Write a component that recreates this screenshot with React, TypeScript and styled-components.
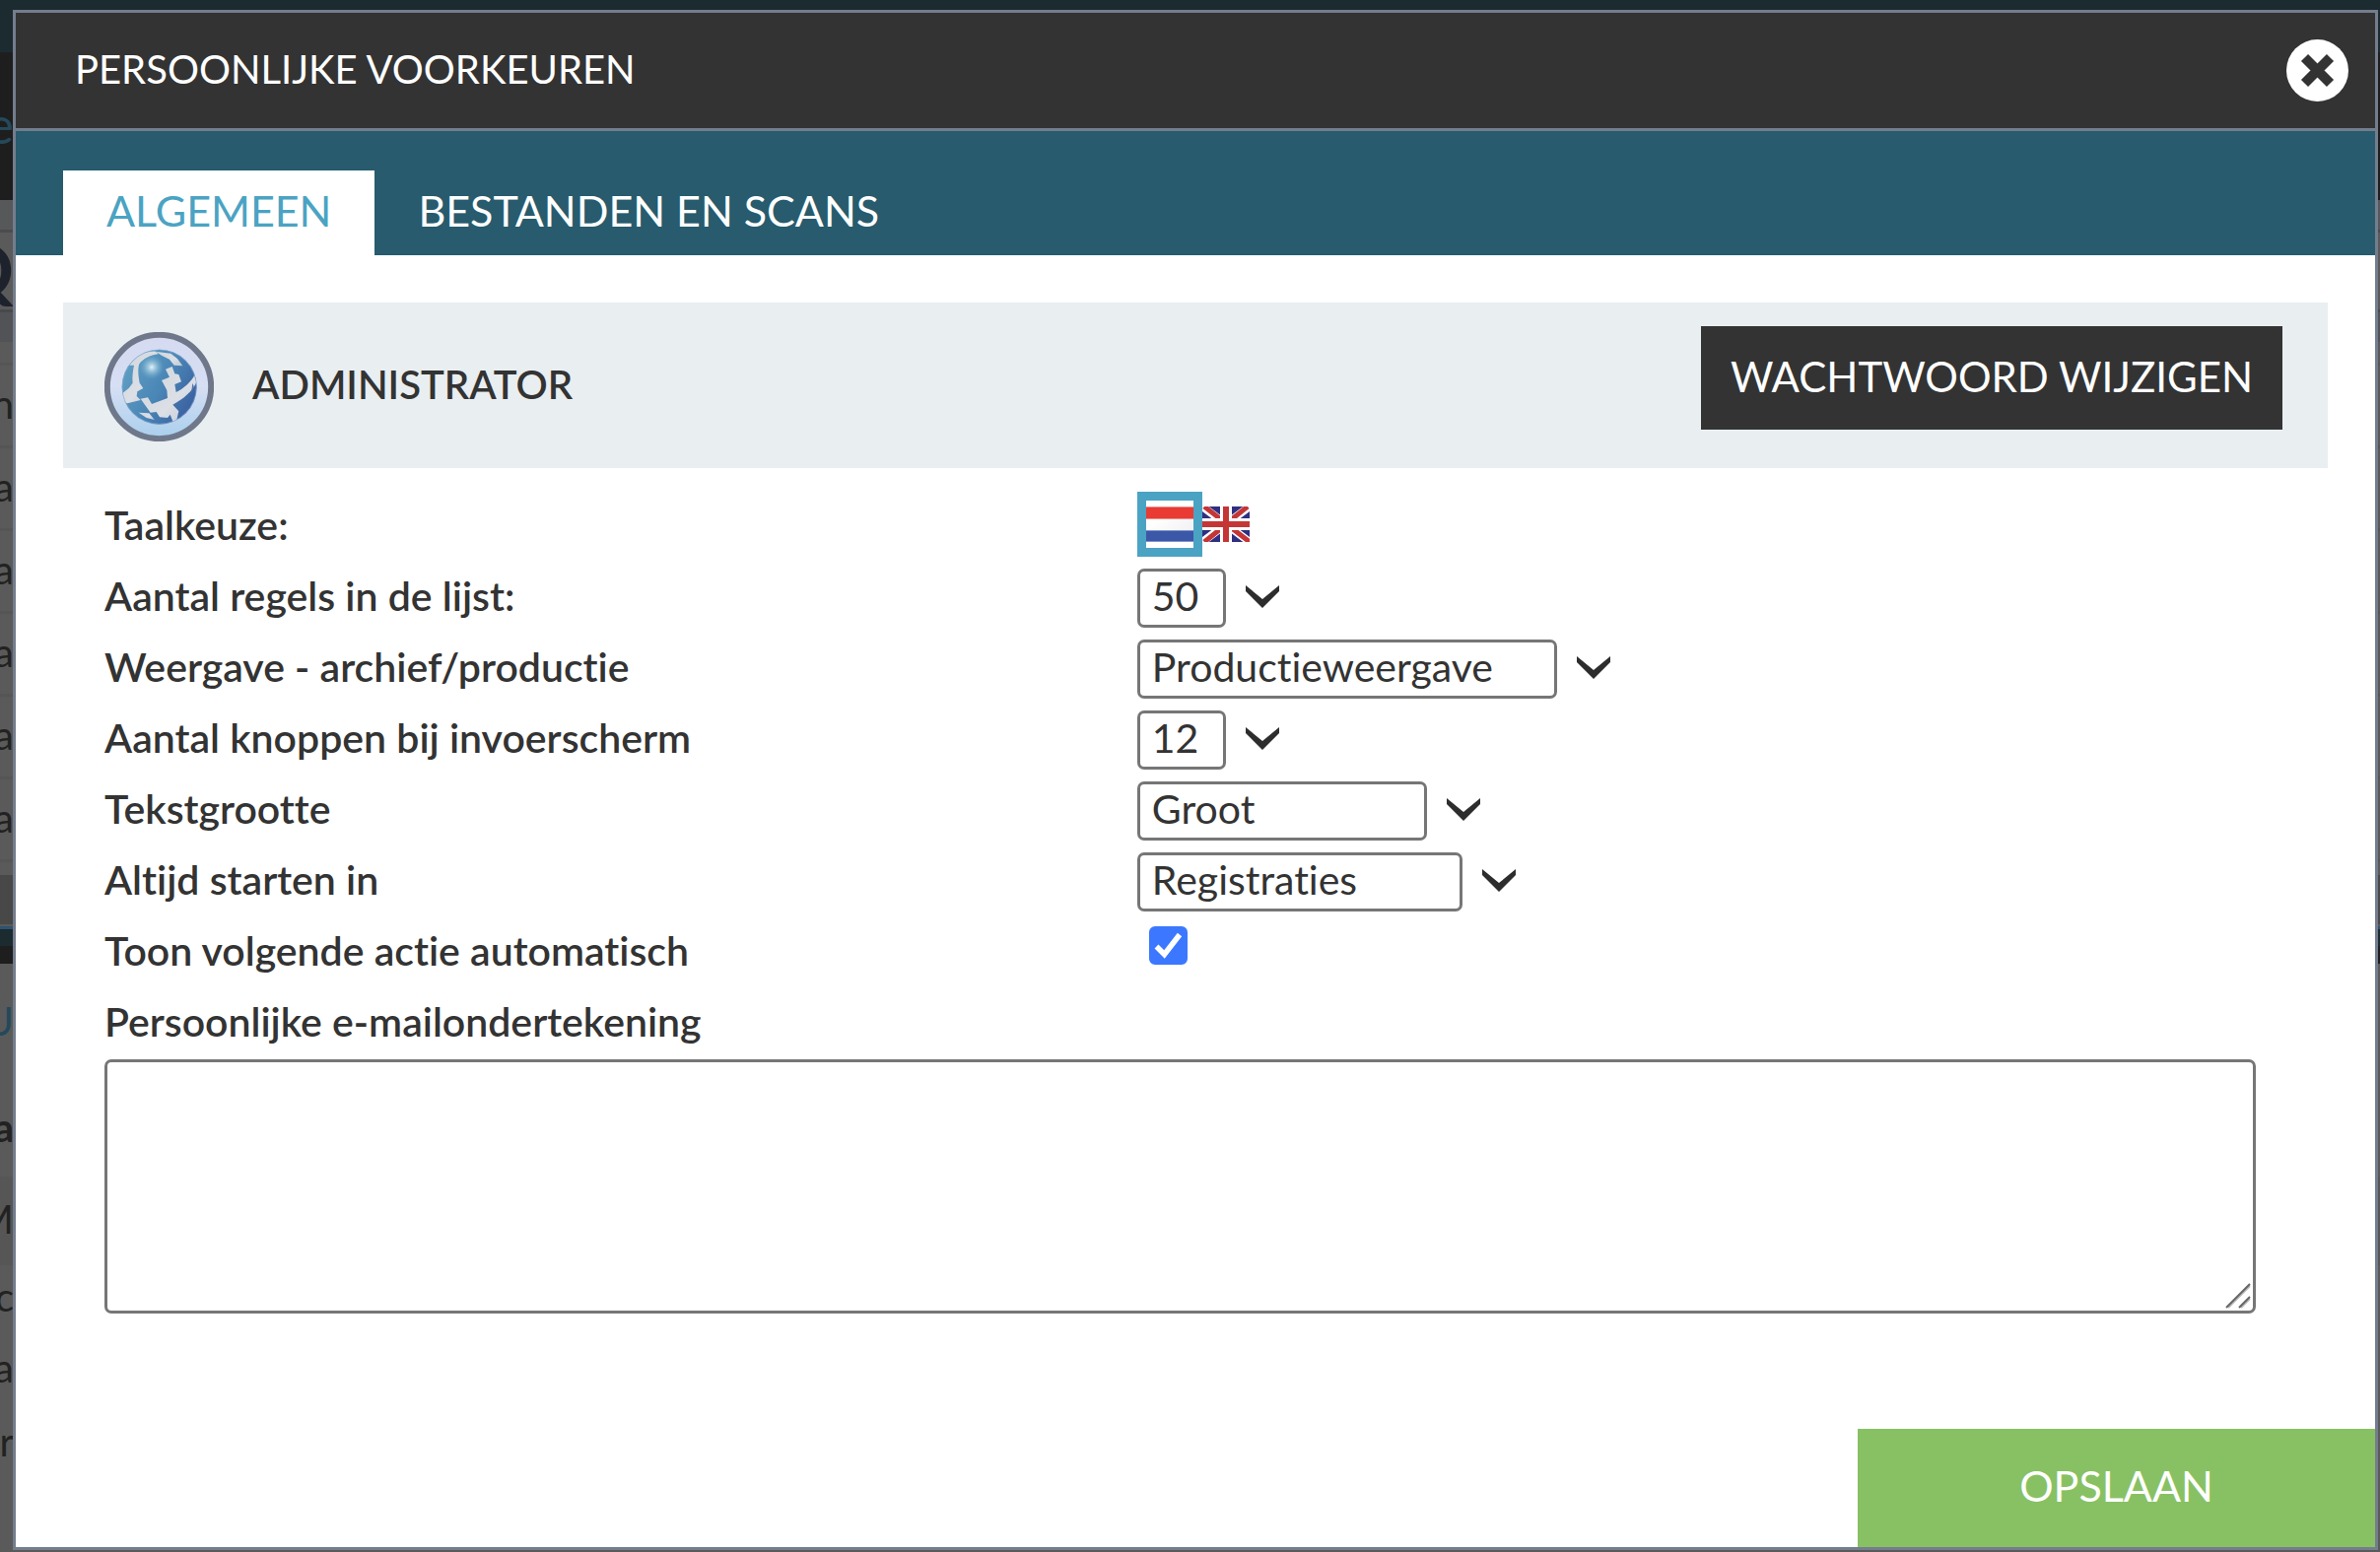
import React, { useState } from "react";
import styled, { createGlobalStyle } from "styled-components";

const color = {
  ink: "#333333",
  line: "#747d8d",
  field: "#767676",
  teal: "#275b6d",
  accent: "#4ba3c3",
  panel: "#e9eef1",
  green: "#88c163",
};

const GlobalStyle = createGlobalStyle`
  *, *::before, *::after { box-sizing: border-box; }
  body {
    margin: 0;
    background: #5a5a5a;
    color: ${color.ink};
    font-family: Lato, "Open Sans", sans-serif;
    font-variant-ligatures: none;
  }
  button, select, textarea, input {
    margin: 0;
    color: inherit;
    font-family: inherit;
    font-variant-ligatures: none;
  }
`;

const Screen = styled.div`
  position: relative;
  display: flex;
  min-height: 100vh;
  padding: 10px 2px 2px 13px;
`;

/* Dimmed page behind the dialog */
const Backdrop = styled.div`
  position: absolute;
  inset: 0;
  overflow: hidden;
  font-size: 40px;
  color: #222222;
`;

const Band = styled.div<{
  $height: number;
  $bg?: string;
  $rule?: string;
  $ink?: string;
  $bold?: boolean;
  $size?: number;
}>`
  display: flex;
  align-items: center;
  height: ${(p) => p.$height}px;
  background: ${(p) => p.$bg ?? "#5a5a5a"};
  border-bottom: ${(p) => (p.$rule ? `3px solid ${p.$rule}` : "0")};
  color: ${(p) => p.$ink ?? "inherit"};
  font-weight: ${(p) => (p.$bold ? 700 : 400)};
  font-size: ${(p) => p.$size ?? 40}px;
  line-height: 1;
`;

const Sliver = styled.span`
  display: flex;
  justify-content: flex-end;
  width: 14px;
  padding-bottom: 4px;
  white-space: nowrap;
`;

const Dialog = styled.section`
  position: relative;
  display: flex;
  flex: 1;
  flex-direction: column;
  border: 3px solid ${color.line};
  background: #ffffff;
`;

const TitleBar = styled.header`
  display: flex;
  align-items: center;
  justify-content: space-between;
  height: 120px;
  padding: 0 27px 0 60px;
  border-bottom: 3px solid ${color.line};
  background: ${color.ink};
  color: #ffffff;
`;

const Title = styled.h1`
  margin: 0;
  padding-bottom: 4px;
  font-size: 40px;
  font-weight: 400;
  line-height: 48px;
`;

const CloseButton = styled.button`
  display: flex;
  width: 63px;
  height: 63px;
  padding: 0;
  border: 0;
  background: none;
  cursor: pointer;
`;

const TabBar = styled.nav`
  display: flex;
  padding: 40px 48px 0;
  background: ${color.teal};
`;

const Tab = styled.a<{ $active?: boolean }>`
  display: flex;
  align-items: center;
  height: 86px;
  padding: 0 44px 4px;
  background: ${(p) => (p.$active ? "#ffffff" : "transparent")};
  color: ${(p) => (p.$active ? color.accent : "#ffffff")};
  font-size: 43px;
  line-height: 48px;
  text-decoration: none;
`;

const Content = styled.main`
  padding: 48px 48px 0;
`;

const UserBar = styled.div`
  display: flex;
  align-items: flex-start;
  justify-content: space-between;
  padding: 24px 46px 27px 42px;
  background: ${color.panel};
`;

const User = styled.div`
  display: flex;
  align-items: center;
  gap: 39px;
  padding-top: 6px;
`;

const UserName = styled.h2`
  margin: 0;
  padding-bottom: 6px;
  font-size: 40px;
  font-weight: 600;
  line-height: 48px;
`;

const DarkButton = styled.button`
  height: 105px;
  padding: 0 30px 4px;
  border: 0;
  background: ${color.ink};
  font-size: 42px;
  line-height: 48px;
  cursor: pointer;

  && { color: #ffffff; }
`;

const Form = styled.form`
  padding: 24px 73px 0 42px;
`;

const Row = styled.div`
  display: grid;
  grid-template-columns: 48% 1fr;
  align-items: center;
  height: 72px;
`;

const Label = styled.label`
  padding-bottom: 4px;
  font-size: 41px;
  font-weight: 600;
  line-height: 48px;
  white-space: nowrap;
`;

const Control = styled.div`
  display: flex;
  align-items: center;
  gap: 20px;
`;

const Flags = styled.div`
  display: flex;
  align-items: center;
  align-self: start;
`;

const FlagButton = styled.button<{ $selected?: boolean }>`
  display: flex;
  align-items: center;
  justify-content: center;
  box-sizing: content-box;
  width: 48px;
  height: 48px;
  padding: 0;
  border: ${(p) => (p.$selected ? `9px solid ${color.accent}` : "0")};
  background: #ffffff;
  cursor: pointer;
`;

const Select = styled.select<{ $width: number }>`
  appearance: none;
  width: ${(p) => p.$width}px;
  height: 60px;
  padding: 0 9px 4px 12px;
  border: 3px solid ${color.field};
  border-radius: 7px;
  background: #ffffff;
  font-size: 41px;
  line-height: 48px;
`;

const CheckWrap = styled.span`
  position: relative;
  display: flex;
  align-self: start;
  margin: 9px 0 0 12px;

  svg {
    position: absolute;
    inset: 0;
    pointer-events: none;
  }
`;

const Checkbox = styled.input`
  appearance: none;
  width: 39px;
  height: 39px;
  border: 3px solid ${color.field};
  border-radius: 6px;
  background: #ffffff;

  &:checked {
    border-color: #3b78ff;
    background: #3b78ff;
  }
`;

const SignatureBox = styled.div`
  position: relative;
  display: flex;

  svg {
    position: absolute;
    right: 5px;
    bottom: 5px;
  }
`;

const Signature = styled.textarea`
  width: 100%;
  height: 258px;
  padding: 6px 12px;
  border: 3px solid ${color.field};
  border-radius: 7px;
  font-size: 41px;
  line-height: 48px;
  resize: none;
`;

const Footer = styled.footer`
  display: flex;
  justify-content: flex-end;
  margin-top: auto;
`;

const SaveButton = styled.button`
  width: 525px;
  height: 120px;
  padding: 0 0 4px;
  border: 0;
  background: ${color.green};
  font-size: 43px;
  line-height: 48px;
  cursor: pointer;

  && { color: #ffffff; }
`;

const CloseIcon = () => (
  <svg width="63" height="63" viewBox="0 0 63 63" aria-hidden="true">
    <circle cx="31.5" cy="31.5" r="31.5" fill="#ffffff" />
    <path d="M18.5 18.5 44.5 44.5M44.5 18.5 18.5 44.5" stroke="#333333" strokeWidth="10" />
  </svg>
);

const Chevron = () => (
  <svg width="34" height="28" viewBox="0 0 34 28" aria-hidden="true">
    <path d="M0 1 17 15 34 1V7L17 24 0 7Z" fill="#2d2d2d" />
  </svg>
);

const DutchFlag = () => (
  <svg width="48" height="36" viewBox="0 0 48 36" aria-hidden="true">
    <defs>
      <linearGradient id="nl-white" x1="0" y1="0" x2="1" y2="1">
        <stop offset="0.3" stopColor="#ffffff" />
        <stop offset="1" stopColor="#ededf2" />
      </linearGradient>
    </defs>
    <rect width="48" height="36" fill="url(#nl-white)" />
    <rect width="48" height="12" fill="#e93a34" />
    <rect y="24" width="48" height="12" fill="#3b57a7" />
    <path d="M0 .5H48M0 12.5H48" stroke="#f0908c" />
    <path d="M0 24.5H48M0 35.5H48" stroke="#8292c8" />
  </svg>
);

const BritishFlag = () => (
  <svg width="48" height="36" viewBox="0 0 48 36" aria-hidden="true">
    <rect width="48" height="36" fill="#2f2f82" />
    <path d="M0 0 48 36M48 0 0 36" stroke="#ffffff" strokeWidth="8" />
    <path d="M2 0 24 17M46 0 26 16M22 20 2 36M26 19 48 36" stroke="#c43636" strokeWidth="5" />
    <path d="M24 0V36M0 18H48" stroke="#ffffff" strokeWidth="12" />
    <path d="M24 0V36M0 18H48" stroke="#c43636" strokeWidth="6" />
  </svg>
);

const Check = () => (
  <svg width="39" height="39" viewBox="0 0 39 39" aria-hidden="true">
    <path d="M7.5 20.5 15.5 28.5 31 8.5" fill="none" stroke="#ffffff" strokeWidth="5.5" />
  </svg>
);

const ResizeGrip = () => (
  <svg width="26" height="26" viewBox="0 0 26 26" aria-hidden="true">
    <path d="M3 25 25 3M16 25 25 16" stroke="#bdbdbd" strokeWidth="2" />
    <path d="M1 25 25 1M14 25 25 14" stroke="#666666" strokeWidth="2" />
  </svg>
);

const GlobeAvatar = () => (
  <svg width="111" height="111" viewBox="48 51 333 333" role="img" aria-label="Administrator">
    <defs>
      <linearGradient id="halo" x1="0" y1="0" x2="0" y2="1">
        <stop offset="0" stopColor="#d5daf1" />
        <stop offset="0.5" stopColor="#d6dff4" />
        <stop offset="1" stopColor="#a9cfec" />
      </linearGradient>
      <linearGradient id="ocean" x1="0.1" y1="0.2" x2="1" y2="0.7">
        <stop offset="0" stopColor="#5d9cc2" />
        <stop offset="0.5" stopColor="#4a86b6" />
        <stop offset="1" stopColor="#3a60a0" />
      </linearGradient>
      <radialGradient id="shine">
        <stop offset="0" stopColor="#e4f2f9" />
        <stop offset="0.4" stopColor="#a5cde2" stopOpacity="0.7" />
        <stop offset="1" stopColor="#6ba6c8" stopOpacity="0" />
      </radialGradient>
      <linearGradient id="land" x1="0" y1="0" x2="1" y2="1">
        <stop offset="0" stopColor="#d0d6dc" />
        <stop offset="0.6" stopColor="#dcdfe6" />
        <stop offset="1" stopColor="#bfc7d6" />
      </linearGradient>
      <clipPath id="ball">
        <circle cx="215" cy="218" r="114" />
      </clipPath>
    </defs>
    <circle cx="214.5" cy="217.5" r="158" fill="url(#halo)" stroke="#6f788b" strokeWidth="18" />
    <circle cx="215" cy="218" r="114" fill="url(#ocean)" />
    <circle cx="192" cy="158" r="38" fill="url(#shine)" />
    <g clipPath="url(#ball)" fill="url(#land)">
      <path d="M124 152C146 122 172 108 204 110L212 118C186 122 166 132 154 148 148 166 152 190 155 206L166 222 148 232 146 246 158 258 118 268 98 262 104 236 122 222 134 206C132 190 134 172 138 152Z" />
      <path d="M204 110 250 116 270 132 286 154 260 152 246 134 222 122Z" />
      <path d="M234 164 254 156 262 178 274 180 282 202 262 210 266 234C290 222 312 202 322 182L328 204C316 230 290 254 256 272L274 292 268 318 258 328 248 302 240 312 216 310 206 294 188 296 158 254 180 250 192 270 240 252 238 228 222 198 246 188Z" />
      <path d="M152 296 184 298 200 318 176 312Z" />
    </g>
    <path d="M316 206 320 216 312 240Z" fill="#4f74ab" />
    <circle cx="215" cy="218" r="113" fill="none" stroke="#8fb0d2" strokeOpacity="0.6" strokeWidth="3" />
  </svg>
);

type SelectRowProps = { id: string; label: string; width: number; options: string[]; value: string };

const SelectRow = ({ id, label, width, options, value }: SelectRowProps) => (
  <Row>
    <Label htmlFor={id}>{label}</Label>
    <Control>
      <Select id={id} $width={width} defaultValue={value}>
        {options.map((option) => (
          <option key={option}>{option}</option>
        ))}
      </Select>
      <Chevron />
    </Control>
  </Row>
);

const selectRows: SelectRowProps[] = [
  { id: "regels", label: "Aantal regels in de lijst:", width: 90, options: ["50"], value: "50" },
  {
    id: "weergave",
    label: "Weergave - archief/productie",
    width: 426,
    options: ["Productieweergave"],
    value: "Productieweergave",
  },
  { id: "knoppen", label: "Aantal knoppen bij invoerscherm", width: 90, options: ["12"], value: "12" },
  { id: "tekst", label: "Tekstgrootte", width: 294, options: ["Groot"], value: "Groot" },
  { id: "start", label: "Altijd starten in", width: 330, options: ["Registraties"], value: "Registraties" },
];

const PageBehind = () => (
  <Backdrop aria-hidden="true">
    <Band $height={53} $bg="#1c2b30" />
    <Band $height={150} $bg="#1e1e1e" $ink="#24495a" $size={52}>
      <Sliver>e</Sliver>
    </Band>
    <Band $height={33} $bg="#57585a" $rule="#4b4c4f" />
    <Band $height={81} $ink="#1e222d" $bold $size={72} $rule="#48494c">
      <Sliver>Q</Sliver>
    </Band>
    <Band $height={30} $bg="#525356" />
    <Band $height={24} $rule="#555555" />
    <Band $height={84} $rule="#555555">
      <Sliver>n</Sliver>
    </Band>
    {[1, 2, 3, 4, 5].map((n) => (
      <Band key={n} $height={84} $rule="#555555">
        <Sliver>a</Sliver>
      </Band>
    ))}
    <Band $height={13} />
    <Band $height={50} $bg="#484848" />
    <Band $height={5} $bg="#5a5a5a" $rule="#2c5470" />
    <Band $height={17} $bg="#1c2b30" />
    <Band $height={18} $bg="#1e1e1e" />
    <Band $height={120} $ink="#24495a">
      <Sliver>U</Sliver>
    </Band>
    <Band $height={96} $bold>
      <Sliver>a</Sliver>
    </Band>
    <Band $height={90} $bg="#565656">
      <Sliver>M</Sliver>
    </Band>
    <Band $height={68}>
      <Sliver>c</Sliver>
    </Band>
    <Band $height={75}>
      <Sliver>a</Sliver>
    </Band>
    <Band $height={75}>
      <Sliver>r</Sliver>
    </Band>
  </Backdrop>
);

export default function App() {
  const [language, setLanguage] = useState("nl");

  return (
    <>
      <GlobalStyle />
      <Screen>
        <PageBehind />
        <Dialog role="dialog" aria-labelledby="title">
          <TitleBar>
            <Title id="title">PERSOONLIJKE VOORKEUREN</Title>
            <CloseButton type="button" aria-label="Sluiten">
              <CloseIcon />
            </CloseButton>
          </TitleBar>
          <TabBar>
            <Tab href="#algemeen" $active aria-current="page">
              ALGEMEEN
            </Tab>
            <Tab href="#bestanden">BESTANDEN EN SCANS</Tab>
          </TabBar>
          <Content>
            <UserBar>
              <User>
                <GlobeAvatar />
                <UserName>ADMINISTRATOR</UserName>
              </User>
              <DarkButton type="button">WACHTWOORD WIJZIGEN</DarkButton>
            </UserBar>
            <Form id="preferences">
              <Row>
                <Label as="span" id="taal">
                  Taalkeuze:
                </Label>
                <Flags role="group" aria-labelledby="taal">
                  <FlagButton
                    type="button"
                    aria-label="Nederlands"
                    $selected={language === "nl"}
                    onClick={() => setLanguage("nl")}
                  >
                    <DutchFlag />
                  </FlagButton>
                  <FlagButton
                    type="button"
                    aria-label="English"
                    $selected={language === "en"}
                    onClick={() => setLanguage("en")}
                  >
                    <BritishFlag />
                  </FlagButton>
                </Flags>
              </Row>
              {selectRows.map((row) => (
                <SelectRow key={row.id} {...row} />
              ))}
              <Row>
                <Label htmlFor="volgende">Toon volgende actie automatisch</Label>
                <CheckWrap>
                  <Checkbox id="volgende" type="checkbox" defaultChecked />
                  <Check />
                </CheckWrap>
              </Row>
              <Row>
                <Label htmlFor="ondertekening">Persoonlijke e-mailondertekening</Label>
              </Row>
              <SignatureBox>
                <Signature id="ondertekening" />
                <ResizeGrip />
              </SignatureBox>
            </Form>
          </Content>
          <Footer>
            <SaveButton type="submit" form="preferences">
              OPSLAAN
            </SaveButton>
          </Footer>
        </Dialog>
      </Screen>
    </>
  );
}
